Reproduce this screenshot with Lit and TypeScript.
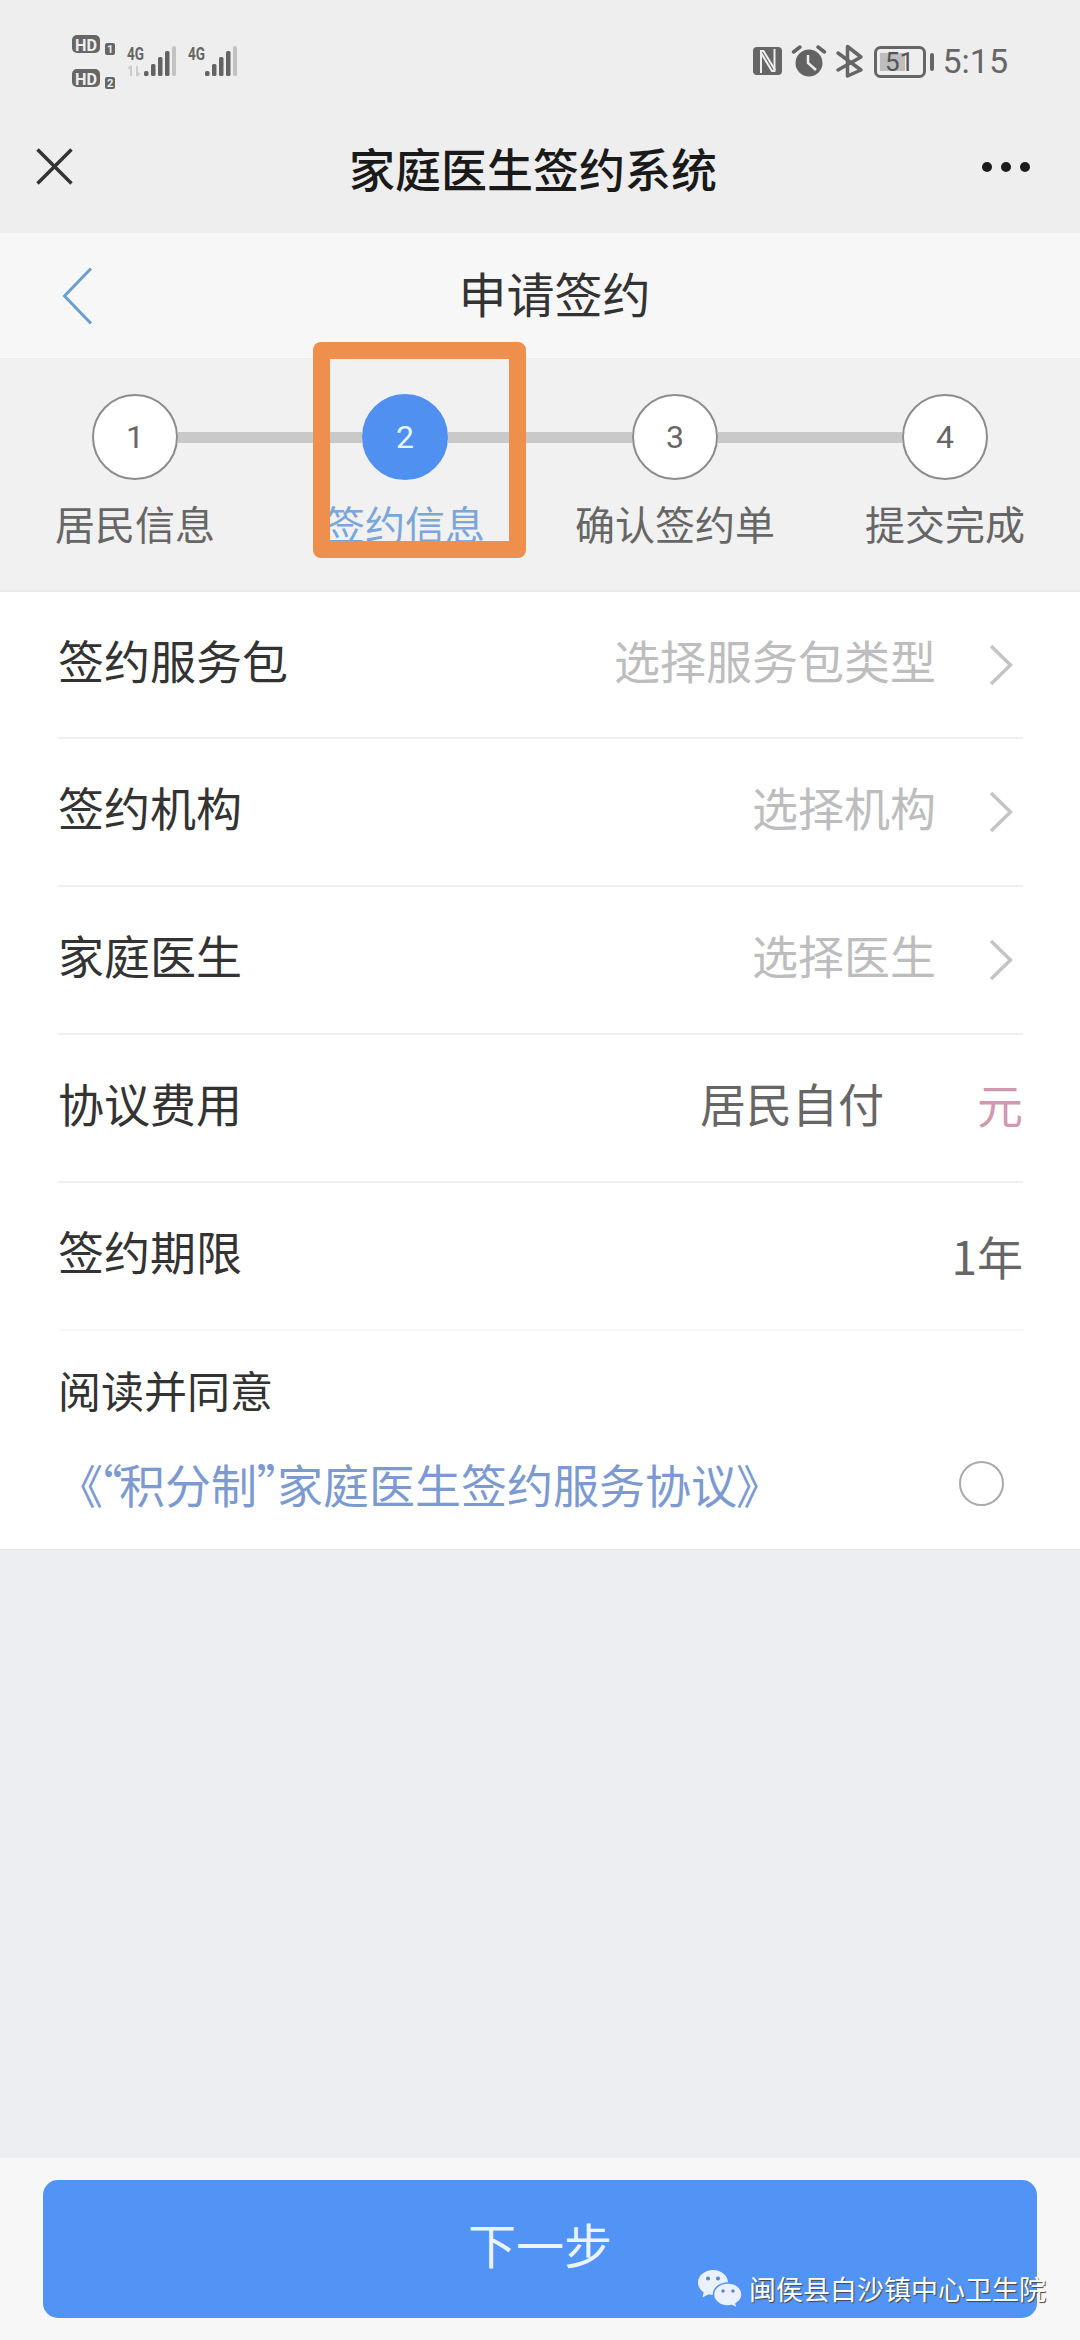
import { LitElement, html, css, svg } from "lit";
import { customElement } from "lit/decorators.js";
import { classMap } from "lit/directives/class-map.js";

const STEPS = ["居民信息", "签约信息", "确认签约单", "提交完成"];

const PICKERS = [
  { label: "签约服务包", hint: "选择服务包类型" },
  { label: "签约机构", hint: "选择机构" },
  { label: "家庭医生", hint: "选择医生" },
];

// signal bars: page x of each bar, top y. Bottom is always y=76.
const signalBars = (dx: number) =>
  [
    [144, 71],
    [151, 64],
    [158, 57],
    [165, 51],
  ].map(
    ([x, top]) =>
      svg`<rect x=${x + dx} y=${top} width="4.5" height=${76 - top} rx="1.5" fill="#636363"></rect>`
  );

const statusLeft = html`
  <svg class="status-left" width="170" height="60" viewBox="70 30 170 60">
    <g font-family="Roboto, sans-serif" font-weight="700">
      <rect x="72" y="35" width="28" height="18" rx="5" fill="#666"></rect>
      <text x="75" y="50.500" font-size="17" fill="#eee" textLength="22" lengthAdjust="spacingAndGlyphs">HD</text>
      <rect x="105" y="43" width="10" height="12" rx="2" fill="#666"></rect>
      <text x="107" y="53" font-size="11" fill="#eee">1</text>
      <rect x="72" y="69" width="28" height="18" rx="5" fill="#666"></rect>
      <text x="75" y="84.500" font-size="17" fill="#eee" textLength="22" lengthAdjust="spacingAndGlyphs">HD</text>
      <rect x="105" y="77" width="10" height="12" rx="2" fill="#666"></rect>
      <text x="107" y="87" font-size="11" fill="#eee">2</text>
      <text x="127" y="60" font-size="19" fill="#666" textLength="17" lengthAdjust="spacingAndGlyphs">4G</text>
      <text x="188" y="60" font-size="19" fill="#666" textLength="17" lengthAdjust="spacingAndGlyphs">4G</text>
    </g>
    <path d="M131 76V66M128.500 69L131 66M137 66V76M137 76L139.500 73" stroke="#ccc" stroke-width="2" fill="none"></path>
    ${signalBars(0)}
    <rect x="172" y="46" width="4" height="30" rx="1.500" fill="#c2c2c2"></rect>
    ${signalBars(61)}
    <rect x="233" y="46" width="4" height="30" rx="1.500" fill="#c2c2c2"></rect>
  </svg>
`;

const statusRight = html`
  <svg class="status-right" width="185" height="42" viewBox="750 40 185 42">
    <rect x="753" y="47" width="29" height="28" rx="4" fill="#666"></rect>
    <path d="M761 73V51H763.500L775 70" stroke="#eee" stroke-width="2" fill="none"></path>
    <path d="M774.500 49V71H772L760.500 52" stroke="#eee" stroke-width="2" fill="none"></path>
    <circle cx="809" cy="63" r="13.500" fill="#636363"></circle>
    <path d="M808 55V63L816 70" stroke="#eee" stroke-width="2.500" fill="none"></path>
    <path d="M793.500 52L800 47M818 47L824.500 52" stroke="#636363" stroke-width="3.500" stroke-linecap="round"></path>
    <path d="M838 53L861 70L847.500 76V46.500L861 57L838 70" stroke="#666" stroke-width="3.500" stroke-linejoin="round" stroke-linecap="round" fill="none"></path>
    <rect x="875.500" y="47.500" width="49" height="29" rx="5" stroke="#666" stroke-width="3" fill="none"></rect>
    <rect x="880" y="53" width="25" height="18" fill="#bdbdbd"></rect>
    <text x="885" y="71" font-family="Roboto, sans-serif" font-size="26" fill="#555">51</text>
    <rect x="930" y="53" width="4" height="18" rx="2" fill="#666"></rect>
  </svg>
`;

const chevron = html`
  <svg class="chevron" width="24" height="42" viewBox="0 0 24 42">
    <path d="M2 2L21.500 21L2 40" stroke="#c4c4c4" stroke-width="3.500" fill="none"></path>
  </svg>
`;

const wechat = html`
  <svg class="wechat" width="44" height="38" viewBox="0 0 44 38">
    <path d="M15 0C6.700 0 0 5.600 0 12.500C0 16.500 2.200 20 5.700 22.300L4.500 27.500L10.600 24.300C12 24.700 13.500 25 15 25C23.300 25 30 19.400 30 12.500S23.300 0 15 0Z" fill="#eaf1fd"></path>
    <path d="M30 13C21.700 13 15.500 18.300 15.500 24.500S21.700 36 30 36C31.300 36 32.500 35.800 33.700 35.500L39 38L38 33.700C41.700 31.500 44 28.200 44 24.500C44 18.300 38.300 13 30 13Z" fill="#eaf1fd" stroke="#5294f6" stroke-width="1.500"></path>
    <circle cx="10" cy="8.500" r="2" fill="#5a86c8"></circle>
    <circle cx="20" cy="8.500" r="2" fill="#5a86c8"></circle>
    <circle cx="25" cy="21" r="1.700" fill="#5a86c8"></circle>
    <circle cx="35" cy="21" r="1.700" fill="#5a86c8"></circle>
  </svg>
`;

@customElement("app-root")
export class AppRoot extends LitElement {
  static styles = css`
    :host {
      display: flex;
      flex-direction: column;
      width: 1080px;
      height: 2340px;
      background: #edeef2;
      font-family: "Noto Sans CJK SC", sans-serif;
      color: #333;
    }

    svg {
      display: block;
      flex: none;
    }

    .topbar {
      height: 233px;
      background: #eeeeee;
    }

    .status {
      display: flex;
      justify-content: space-between;
      height: 100px;
      padding: 30px 72px 0 70px;
      box-sizing: border-box;
    }

    .status-right-group {
      display: flex;
      align-items: center;
      height: 42px;
      margin-top: 10px;
    }

    .time {
      margin-left: 7px;
      font-family: Roboto, sans-serif;
      font-size: 34px;
      line-height: 42px;
      color: #666;
    }

    .nav {
      display: grid;
      grid-template-columns: 1fr auto 1fr;
      align-items: center;
      height: 133px;
      padding: 0 50px 0 36px;
    }

    .title {
      font-size: 46px;
      font-weight: 500;
      line-height: 60px;
      color: #1a1a1a;
    }

    .dots {
      display: flex;
      justify-self: end;
      gap: 9px;
    }

    .dots span {
      width: 10px;
      height: 10px;
      border-radius: 50%;
      background: #1c1c1c;
    }

    .subbar {
      display: grid;
      grid-template-columns: 1fr auto 1fr;
      align-items: center;
      height: 125px;
      padding: 0 33px 0 62px;
      box-sizing: border-box;
      background: #f7f7f7;
    }

    .subtitle {
      margin-bottom: 8px;
      font-size: 48px;
      line-height: 60px;
      color: #333;
    }

    .steps {
      position: relative;
      height: 234px;
      padding-top: 35px;
      box-sizing: border-box;
      background: #f1f1f1;
      border-top: 1px solid #ececec;
      border-bottom: 2px solid #e9e9e9;
    }

    .track {
      display: flex;
      align-items: center;
      padding: 0 92px;
    }

    .circle {
      display: flex;
      flex: none;
      align-items: center;
      justify-content: center;
      width: 86px;
      height: 86px;
      box-sizing: border-box;
      border: 2px solid #8c8c8c;
      border-radius: 50%;
      background: #fff;
      font-family: Roboto, sans-serif;
      font-size: 32px;
      color: #666;
    }

    .circle.active {
      border-color: #4f90f0;
      background: #4f90f0;
      color: #e8f6ff;
    }

    .link {
      flex: 1;
      height: 11px;
      background: #c9c9c9;
    }

    .labels {
      display: grid;
      grid-template-columns: repeat(4, 270px);
      margin-top: 17px;
      font-size: 40px;
      line-height: 52px;
      color: #666;
      text-align: center;
    }

    .labels .active {
      color: #7aa6d8;
    }

    .highlight {
      position: absolute;
      top: -17px;
      left: 313px;
      width: 213px;
      height: 216px;
      box-sizing: border-box;
      border: 17px solid #ee8f4d;
      border-radius: 8px;
    }

    .form {
      height: 958px;
      box-sizing: border-box;
      background: #fff;
      border-bottom: 1px solid #e6e6e6;
    }

    .row {
      display: flex;
      align-items: center;
      justify-content: space-between;
      height: 148px;
      margin: 0 57px 0 58px;
      padding-bottom: 12px;
      box-sizing: border-box;
      border-bottom: 2px solid #efefef;
      font-size: 46px;
      line-height: 60px;
    }

    .row:first-child {
      height: 147px;
    }

    .row.last {
      border-bottom-color: #f8f8f8;
    }

    .row .value {
      display: flex;
      align-items: center;
      color: #666;
    }

    .hint {
      color: #bdbdbd;
    }

    .chevron {
      margin: 12px 10px 0 53px;
    }

    .unit {
      margin-top: 2px;
      margin-left: 93px;
      color: #cf9ab0;
    }

    .term {
      margin-top: 9px;
    }

    .agree {
      padding: 0 58px;
    }

    .agree-title {
      margin-top: 30px;
      font-size: 43px;
      line-height: 56px;
    }

    .agree-line {
      display: flex;
      align-items: center;
      justify-content: space-between;
      margin-top: 38px;
      padding: 0 18px 0 21px;
      font-size: 46px;
      line-height: 56px;
      color: #7c9ad0;
    }

    .punct {
      font-feature-settings: "palt";
      letter-spacing: -3px;
    }

    .radio {
      width: 45px;
      height: 45px;
      box-sizing: border-box;
      border: 2px solid #aaa;
      border-radius: 50%;
    }

    .spacer {
      flex: 1;
    }

    .footer {
      position: relative;
      height: 182px;
      padding: 22px 43px 0;
      box-sizing: border-box;
      background: #f7f7f7;
    }

    .next {
      display: flex;
      align-items: center;
      justify-content: center;
      height: 138px;
      padding-bottom: 12px;
      box-sizing: border-box;
      border-radius: 15px;
      background: #5294f6;
      color: #eaf3ff;
      font-size: 48px;
    }

    .watermark {
      position: absolute;
      right: 34px;
      bottom: 32px;
      display: flex;
      align-items: center;
      gap: 7px;
      color: #fff;
      font-size: 27px;
      line-height: 38px;
      text-shadow: 1px 1px 1px #444;
    }
  `;

  render() {
    return html`
      <div class="topbar">
        <div class="status">
          ${statusLeft}
          <div class="status-right-group">
            ${statusRight}
            <span class="time">5:15</span>
          </div>
        </div>
        <div class="nav">
          <svg width="37" height="37" viewBox="0 0 37 37">
            <path d="M1.500 1.500L35.500 35.500M35.500 1.500L1.500 35.500" stroke="#333" stroke-width="3.500"></path>
          </svg>
          <div class="title">家庭医生签约系统</div>
          <div class="dots"><span></span><span></span><span></span></div>
        </div>
      </div>

      <div class="subbar">
        <svg width="31" height="58" viewBox="0 0 31 58">
          <path d="M29 1.500L2.500 29L29 56.500" stroke="#6a9fd0" stroke-width="3" fill="none"></path>
        </svg>
        <div class="subtitle">申请签约</div>
      </div>

      <div class="steps">
        <div class="track">
          ${STEPS.map(
            (_, i) => html`
              ${i > 0 ? html`<div class="link"></div>` : ""}
              <div class=${classMap({ circle: true, active: i === 1 })}>${i + 1}</div>
            `
          )}
        </div>
        <div class="labels">
          ${STEPS.map((s, i) => html`<div class=${classMap({ active: i === 1 })}>${s}</div>`)}
        </div>
        <div class="highlight"></div>
      </div>

      <div class="form">
        ${PICKERS.map(
          (p) => html`
            <div class="row">
              <span>${p.label}</span>
              <span class="value"><span class="hint">${p.hint}</span>${chevron}</span>
            </div>
          `
        )}
        <div class="row">
          <span>协议费用</span>
          <span class="value"><span>居民自付</span><span class="unit">元</span></span>
        </div>
        <div class="row last">
          <span>签约期限</span>
          <span class="value term">1年</span>
        </div>
        <div class="agree">
          <div class="agree-title">阅读并同意</div>
          <div class="agree-line">
            <span><span class="punct">《“</span>积分制<span class="punct">”</span>家庭医生签约服务协议<span class="punct">》</span></span>
            <div class="radio"></div>
          </div>
        </div>
      </div>

      <div class="spacer"></div>

      <div class="footer">
        <div class="next">下一步</div>
        <div class="watermark">${wechat}<span>闽侯县白沙镇中心卫生院</span></div>
      </div>
    `;
  }
}
